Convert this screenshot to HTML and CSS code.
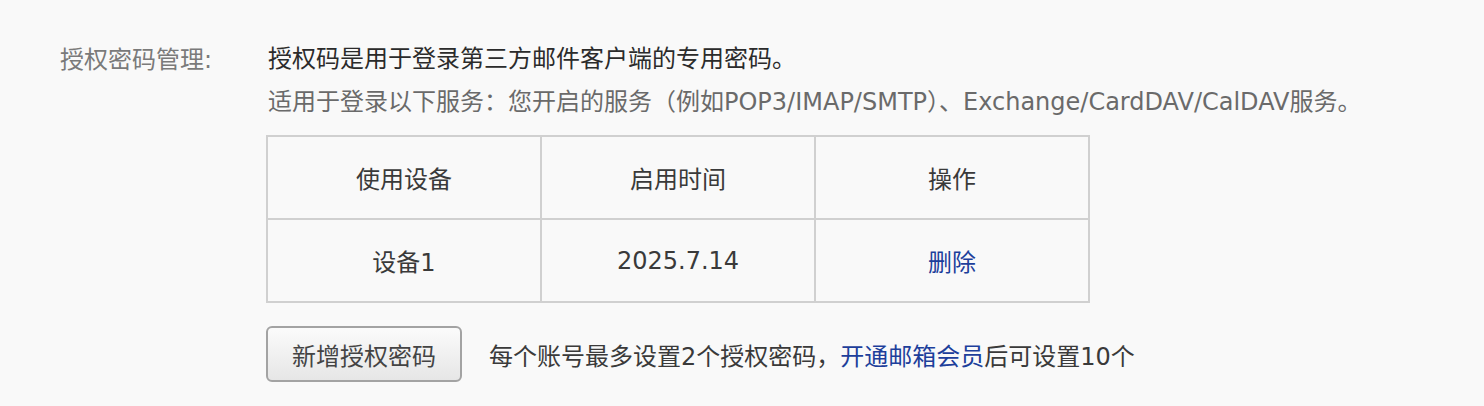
FILE: index.html
```html
<!DOCTYPE html>
<html lang="zh-CN">
<head>
    <meta charset="UTF-8">
    <title>授权密码管理</title>
    <link rel="stylesheet" href="styles.css">
</head>
<body>

<div class="setting-row">
    <div class="setting-label">授权密码管理:</div>
    <div class="setting-body">
        <p class="intro">授权码是用于登录第三方邮件客户端的专用密码。</p>
        <p class="tip">适用于登录以下服务：您开启的服务（例如POP3/IMAP/SMTP）、Exchange/CardDAV/CalDAV服务。</p>

        <table class="device-table">
            <thead>
                <tr>
                    <th>使用设备</th>
                    <th>启用时间</th>
                    <th>操作</th>
                </tr>
            </thead>
            <tbody>
                <tr>
                    <td>设备1</td>
                    <td>2025.7.14</td>
                    <td><a href="#" class="link">删除</a></td>
                </tr>
            </tbody>
        </table>

        <div class="actions">
            <button class="btn">新增授权密码</button>
            <span class="note">每个账号最多设置2个授权密码，<a href="#" class="link">开通邮箱会员</a>后可设置10个</span>
        </div>
    </div>
</div>

</body>
</html>
```

FILE: styles.css
```css
body {
    margin: 0;
    padding: 38px 0 0 60px;
    background-color: #f9f9f9;
    color: #333;
    font-family: "DejaVu Sans", Verdana, "Noto Sans CJK SC", sans-serif;
    font-size: 24px;
}
.setting-row {
    display: flex;
}
.setting-label {
    width: 206px;
    flex-shrink: 0;
    color: #7a7a7a;
    line-height: 44px;
}
.setting-body p {
    margin: 0;
    line-height: 43px;
}
.intro {
    color: #2b2b2b;
    padding-left: 2px;
}
.tip {
    color: #6a6a6a;
    padding-left: 2px;
}
.device-table {
    margin-top: 11px;
    width: 824px;
    border-collapse: collapse;
    table-layout: fixed;
    border: 2px solid #d0d0d0;
}
.device-table th,
.device-table td {
    border: 2px solid #d0d0d0;
    height: 81px;
    padding: 0;
    text-align: center;
    font-weight: normal;
    color: #3a3a3a;
}
.link {
    color: #1d3f9b;
    text-decoration: none;
}
.actions {
    display: flex;
    align-items: center;
    margin-top: 23px;
}
.btn {
    font-family: inherit;
    font-size: 24px;
    color: #444;
    width: 196px;
    height: 56px;
    padding: 0;
    border: 2px solid #a3a3a3;
    border-radius: 6px;
    background: linear-gradient(#fbfbfb, #e6e6e6);
    cursor: pointer;
}
.note {
    margin-left: 27px;
    color: #3a3a3a;
}
```
